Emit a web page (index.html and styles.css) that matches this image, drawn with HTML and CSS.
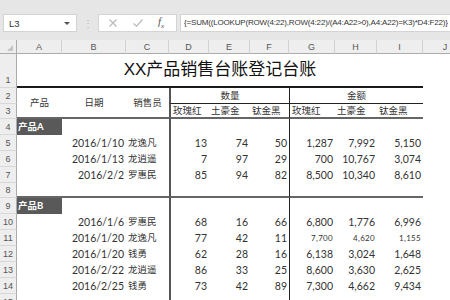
FILE: index.html
```html
<!DOCTYPE html>
<html lang="zh-CN">
<head>
  <meta charset="UTF-8">
  <meta name="viewport" content="width=device-width, initial-scale=1.0">
  <title>XX产品销售台账登记台账</title>
  <link rel="stylesheet" href="styles.css">
</head>
<body>
  <div class="toolbar">
    <div class="name-box">L3<span class="arrow"></span></div>
    <div class="grip">⋮</div>
    <div class="fx-box">
      <svg class="cancel" width="8" height="8" viewBox="0 0 8 8"><path d="M0.5 0.5L7.5 7.5M7.5 0.5L0.5 7.5" /></svg>
      <svg class="enter" width="10" height="8" viewBox="0 0 10 8"><path d="M0.5 4.5L3.5 7.2L9.5 0.5" /></svg>
      <span class="fx">f<sub>x</sub></span>
    </div>
    <div class="formula">{=SUM((LOOKUP(ROW(4:22),ROW(4:22)/(A4:A22&gt;0),A4:A22)=K3)*D4:F22)}</div>
  </div>

  <table class="sheet">
    <colgroup>
      <col style="width:17px"><col style="width:45px"><col style="width:64px"><col style="width:43px">
      <col style="width:40px"><col style="width:41px"><col style="width:39px"><col style="width:46px">
      <col style="width:42px"><col style="width:46px"><col style="width:45px">
    </colgroup>
    <thead>
      <tr>
        <th class="corner"></th>
        <th>A</th><th>B</th><th>C</th><th>D</th><th>E</th><th>F</th><th>G</th><th>H</th><th>I</th><th>J</th>
      </tr>
    </thead>
    <tbody>
      <tr class="r1">
        <th>1</th>
        <td colspan="9" class="title">XX产品销售台账登记台账</td>
        <td></td>
      </tr>
      <tr>
        <th>2</th>
        <td rowspan="2" class="head">产品</td>
        <td rowspan="2" class="head">日期</td>
        <td rowspan="2" class="head">销售员</td>
        <td colspan="3" class="group qty">数量</td>
        <td colspan="3" class="group amt">金额</td>
        <td></td>
      </tr>
      <tr class="r3">
        <th>3</th>
        <td class="sub qty">玫瑰红</td><td class="sub">土豪金</td><td class="sub">钛金黑</td>
        <td class="sub amt">玫瑰红</td><td class="sub">土豪金</td><td class="sub">钛金黑</td>
        <td></td>
      </tr>
      <tr class="row">
        <th>4</th>
        <td class="product">产品A</td><td></td><td></td>
        <td></td><td></td><td></td><td></td><td></td><td></td><td></td>
      </tr>
      <tr class="row">
        <th>5</th>
        <td></td><td>2016/1/10</td><td>龙逸凡</td>
        <td>13</td><td>74</td><td>50</td><td>1,287</td><td>7,992</td><td>5,150</td><td></td>
      </tr>
      <tr class="row">
        <th>6</th>
        <td></td><td>2016/1/13</td><td>龙逍遥</td>
        <td>7</td><td>97</td><td>29</td><td>700</td><td>10,767</td><td>3,074</td><td></td>
      </tr>
      <tr class="row">
        <th>7</th>
        <td></td><td>2016/2/2</td><td>罗惠民</td>
        <td>85</td><td>94</td><td>82</td><td>8,500</td><td>10,340</td><td>8,610</td><td></td>
      </tr>
      <tr class="row end">
        <th>8</th>
        <td></td><td></td><td></td>
        <td></td><td></td><td></td><td></td><td></td><td></td><td></td>
      </tr>
      <tr class="row">
        <th>9</th>
        <td class="product">产品B</td><td></td><td></td>
        <td></td><td></td><td></td><td></td><td></td><td></td><td></td>
      </tr>
      <tr class="row">
        <th>10</th>
        <td></td><td>2016/1/6</td><td>罗惠民</td>
        <td>68</td><td>16</td><td>66</td><td>6,800</td><td>1,776</td><td>6,996</td><td></td>
      </tr>
      <tr class="row">
        <th>11</th>
        <td></td><td>2016/1/20</td><td>龙逸凡</td>
        <td>77</td><td>42</td><td>11</td><td class="tiny">7,700</td><td class="tiny">4,620</td><td class="tiny">1,155</td><td></td>
      </tr>
      <tr class="row">
        <th>12</th>
        <td></td><td>2016/1/20</td><td>钱勇</td>
        <td>62</td><td>28</td><td>16</td><td>6,138</td><td>3,024</td><td>1,648</td><td></td>
      </tr>
      <tr class="row">
        <th>13</th>
        <td></td><td>2016/2/22</td><td>龙逍遥</td>
        <td>86</td><td>33</td><td>25</td><td>8,600</td><td>3,630</td><td>2,625</td><td></td>
      </tr>
      <tr class="row">
        <th>14</th>
        <td></td><td>2016/2/25</td><td>钱勇</td>
        <td>73</td><td>42</td><td>89</td><td>7,300</td><td>4,662</td><td>9,434</td><td></td>
      </tr>
      <tr class="row">
        <th>15</th>
        <td></td><td></td><td></td>
        <td></td><td></td><td></td><td></td><td></td><td></td><td></td>
      </tr>
    </tbody>
  </table>
</body>
</html>
```

FILE: styles.css
```css
body {
  margin: 0;
  background-color: #ffffff;
  color: #333333;
  font-family: 'Lato', 'Noto Sans CJK SC', sans-serif;
  overflow: hidden;
}

/* formula bar */

.toolbar {
  display: flex;
  align-items: center;
  height: 40px;
  padding: 6px 0 0 3px;
  box-sizing: border-box;
  background-color: #e6e6e6;
  font-family: 'Liberation Sans', sans-serif;
}

.name-box {
  display: flex;
  align-items: center;
  justify-content: space-between;
  width: 74px;
  height: 18px;
  padding: 0 6px 0 5px;
  box-sizing: border-box;
  background: #ffffff;
  border: 1px solid #d4d4d4;
  font-size: 9.5px;
  color: #333333;
}

.arrow {
  border-left: 3px solid transparent;
  border-right: 3px solid transparent;
  border-top: 3px solid #555555;
}

.grip {
  width: 21px;
  text-align: center;
  font-size: 10px;
  color: #b4b4b4;
}

.fx-box {
  display: flex;
  align-items: center;
  width: 79px;
  height: 18px;
  padding-left: 10px;
  box-sizing: border-box;
  background: #ffffff;
  border: 1px solid #d4d4d4;
}

.fx-box svg {
  fill: none;
  stroke: #b8b8b8;
  stroke-width: 1.2;
}

.enter {
  margin-left: 16px;
}

.fx {
  margin-left: 15px;
  font-family: 'Liberation Serif', serif;
  font-style: italic;
  font-size: 11px;
  color: #555555;
}

.fx sub {
  font-size: 7px;
}

.formula {
  flex: 1;
  min-width: 0;
  height: 18px;
  margin-left: 3px;
  padding-left: 3px;
  box-sizing: border-box;
  background: #ffffff;
  border: 1px solid #d4d4d4;
  border-right: none;
  font-size: 8px;
  letter-spacing: -0.18px;
  line-height: 16px;
  color: #333333;
  white-space: nowrap;
  overflow: hidden;
}

/* sheet */

.sheet {
  width: 468px;
  table-layout: fixed;
  border-spacing: 0;
  font-size: 10.5px;
}

.sheet td,
.sheet th {
  padding: 0 2px;
  line-height: 12px;
  white-space: nowrap;
  overflow: hidden;
}

.sheet th {
  background-color: #eeeeee;
  font-family: 'Liberation Sans', sans-serif;
  font-weight: normal;
  font-size: 9px;
  color: #555555;
}

.sheet thead th {
  height: 13px;
  border-right: 1px solid #d2d2d2;
  border-bottom: 1px solid #ababab;
}

.sheet thead .corner {
  position: relative;
  border-right: 1px solid #ababab;
}

.corner::after {
  content: "";
  position: absolute;
  right: 3px;
  bottom: 2px;
  border-left: 6px solid transparent;
  border-bottom: 6px solid #c4c4c4;
}

.sheet tbody tr {
  height: 16px;
}

.sheet tbody th {
  padding: 0 0 1px;
  vertical-align: bottom;
  border-right: 1px solid #ababab;
  border-bottom: 1px solid #d8d8d8;
}

.sheet .r1 {
  height: 34px;
}

.sheet .r3,
.sheet .end {
  height: 15px;
}

.title {
  text-align: center;
  font-family: 'Liberation Sans', 'Noto Sans CJK SC', sans-serif;
  font-size: 17px;
  line-height: 20px;
  color: #111111;
  border-bottom: 2px solid #1a1a1a;
}

.head,
.group,
.sub {
  font-size: 9.5px;
  color: #333333;
}

.head {
  text-align: center;
  border-bottom: 2px solid #666666;
}

.group {
  text-align: center;
  border-bottom: 1px solid #222222;
}

.sub {
  text-align: left;
  border-bottom: 2px solid #666666;
}

.qty {
  border-left: 2px solid #555555;
}

.amt {
  border-left: 1px solid #222222;
}

.row td {
  text-align: right;
}

.row td:nth-of-type(3) {
  text-align: left;
  font-size: 9.5px;
}

.row td:nth-of-type(4) {
  border-left: 2px solid #555555;
}

.row td:nth-of-type(7) {
  border-left: 1px solid #222222;
}

.end td:nth-of-type(-n+9) {
  border-bottom: 2px solid #666666;
}

.row .product {
  padding-left: 1px;
  text-align: left;
  background-color: #595959;
  color: #ffffff;
  font-weight: bold;
  font-size: 9.5px;
}

.row .tiny {
  font-size: 8px;
  letter-spacing: 0.3px;
}
```
